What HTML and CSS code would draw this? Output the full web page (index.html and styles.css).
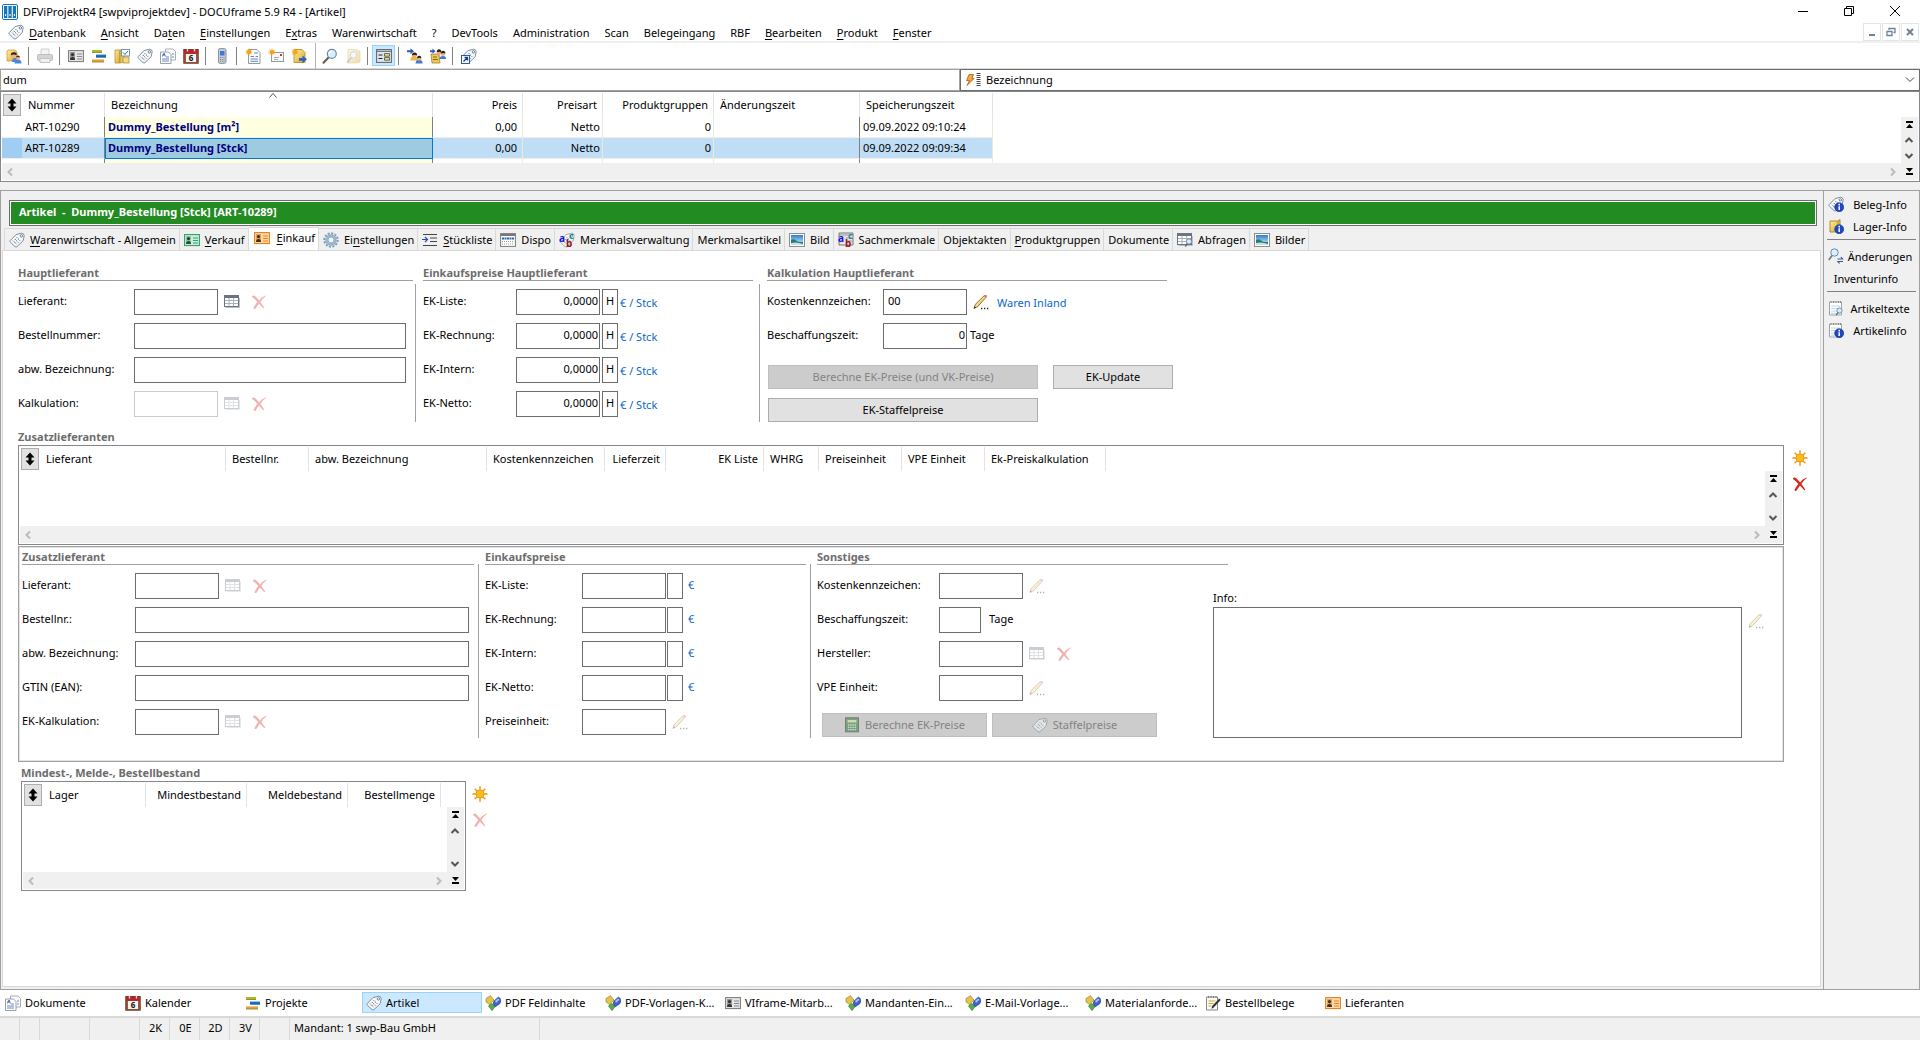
FILE: index.html
```html
<!DOCTYPE html>
<html lang="de">
<head>
    <meta charset="UTF-8">
    <meta name="viewport" content="width=device-width, initial-scale=1.0">
    <title>DFViProjektR4 [swpviprojektdev] - DOCUframe 5.9 R4 - [Artikel]</title>
    <link rel="stylesheet" href="styles.css">
</head>
<body>
    <!-- Farbverläufe -->
    <svg class="gradients" aria-hidden="true">
        <defs>
            <linearGradient id="gYellow" x1="0" y1="0" x2="1" y2="1"><stop offset="0" stop-color="#fff0a0"/><stop offset="1" stop-color="#d9a52c"/></linearGradient>
            <linearGradient id="gSky" x1="0" y1="0" x2="0" y2="1"><stop offset="0" stop-color="#2f7fd0"/><stop offset="1" stop-color="#d8f2fa"/></linearGradient>
        </defs>
    </svg>
    <!-- Icon-Vorlagen -->
    <svg class="sprite" aria-hidden="true">
        <symbol id="i-app" viewBox="0 0 16 16"><rect x=".5" y=".5" width="15" height="15" rx="1.5" fill="#fff" stroke="#1674b8"/><path d="M2 2h3.3v12H2zM6.4 2h3.3v12H6.4zM10.8 2H14v12h-3.2z" fill="#1674b8"/><path d="M3.6 10v2M8 10v2M12.4 10v2" stroke="#fff"/></symbol>
        <symbol id="i-tag" viewBox="0 0 16 16"><path d="M1.2 8.6 7 2.6l5.6-1.4q2.4.2 2.6 2.3l-1 5.2L8 14.6q-1 .8-2 0L1.2 10q-.6-.7 0-1.4z" fill="#f6f8fa" stroke="#7d8fa0"/><circle cx="12.4" cy="3.9" r="1.2" fill="#fff" stroke="#52677a" stroke-width=".8"/><path d="m4 8.6 3.6 3.6M5.8 7l3.6 3.6M7.6 5.2l3.6 3.6" stroke="#5b6d7e" stroke-dasharray="1.4 .6"/></symbol>
        <symbol id="i-login" viewBox="0 0 16 16"><path d="M2 2h7l2 2v9H1V3z" fill="url(#gYellow)" stroke="#c8a13c" stroke-width=".8"/><path d="M6 14q0-4 3-4t4 4z" fill="#4a86d8"/><circle cx="7.6" cy="7.4" r="2.6" fill="#e9b48a"/><path d="M4.8 7.2Q4.8 4 8 4.200t2.600 3Q8 5.800 4.800 7.200z" fill="#3a2416"/><path d="M8.500 15.500q0-4 3.500-4t3.500 4z" fill="#4a86d8"/><circle cx="12" cy="10" r="2" fill="#e9b48a"/><path d="M10 9.500q.4-2 2-2t2 2q-2-.8-4 0z" fill="#3a2416"/></symbol>
        <symbol id="i-printer" viewBox="0 0 16 16"><path d="M4 1h8v6H4z" fill="#f4f4f4" stroke="#cfcfcf"/><rect x=".5" y="6.500" width="15" height="6" rx="1" fill="#d4d4d4" stroke="#bdbdbd"/><path d="M3 10.500h10v4H3z" fill="#f0f0f0" stroke="#c4c4c4"/></symbol>
        <symbol id="i-card" viewBox="0 0 16 16"><rect x=".6" y="2.600" width="14.800" height="11" fill="#e6e6e6" stroke="#777"/><path d="M2 4h5v8H2z" fill="#999"/><circle cx="4.500" cy="6.600" r="1.600" fill="#333"/><path d="M2 12q0-3 2.500-3T7 12z" fill="#333"/><path d="M9 6h5M9 8.500h5M9 11h5" stroke="#888"/></symbol>
        <symbol id="i-card-green" viewBox="0 0 16 16"><rect x=".6" y="2.600" width="14.800" height="11" fill="#c9efdb" stroke="#27966a"/><path d="M2 4h5v8H2z" fill="#8cc7a8"/><circle cx="4.500" cy="6.600" r="1.600" fill="#333"/><path d="M2 12q0-3 2.500-3T7 12z" fill="#2c4a3a"/><path d="M9 6h5M9 8.500h5M9 11h5" stroke="#2fa274"/></symbol>
        <symbol id="i-card-orange" viewBox="0 0 16 16"><rect x=".6" y="2.600" width="14.800" height="11" fill="#ffd9a6" stroke="#dd7a16"/><path d="M2 4h5v8H2z" fill="#e2a25c"/><circle cx="4.500" cy="6.600" r="1.600" fill="#333"/><path d="M2 12q0-3 2.500-3T7 12z" fill="#4a2c12"/><path d="M9 6h5M9 8.500h5M9 11h5" stroke="#e8821a"/></symbol>
        <symbol id="i-gantt" viewBox="0 0 16 16"><path d="M1 2h10v2.800H1z" fill="#a4bf1c"/><path d="M5 6.600h10v2.800H5z" fill="#1773c4"/><path d="M1 11.400h12v2.800H1z" fill="#e6a23a"/><path d="M1 4.500h10M1 14h12" stroke="#7c7014" stroke-width=".6"/><path d="M5 9.200h10" stroke="#0b3f75" stroke-width=".6"/></symbol>
        <symbol id="i-plan" viewBox="0 0 16 16"><path d="M1 2h5v13H1z" fill="url(#gYellow)" stroke="#b98f2c" stroke-width=".8"/><path d="M6 2h4v12l-4 1z" fill="#e8c35a" stroke="#b98f2c" stroke-width=".8"/><rect x="7.500" y="1.500" width="8" height="6.500" fill="#fff" stroke="#6f97c4"/><path d="m9 4.500 2 2 3-3.500" fill="none" stroke="#2c64b0"/><path d="M9 9h6v6H9z" fill="#f1d98c" stroke="#b98f2c" stroke-width=".8"/></symbol>
        <symbol id="i-docs" viewBox="0 0 16 16"><path d="M5.500 1h7.500l2.500 2.500V12h-10z" fill="#fdfdfd" stroke="#9aa5b0" stroke-width=".9"/><path d="M.5 4h8L11 6.500v9H.5z" fill="#fff" stroke="#8a96a3" stroke-width=".9"/><path d="M2 7h3M6 9h3M2 11h7M2 13h7M12 6h2M12 9h2" stroke="#6b87b8"/><path d="M2.500 8.500 4 5l1.500 3.500" fill="none" stroke="#2c4fc0" stroke-width=".8"/></symbol>
        <symbol id="i-cal" viewBox="0 0 16 16"><rect x=".8" y="1.500" width="14.400" height="13.700" fill="#9a5a40" stroke="#6e3626"/><path d="M1 1.800h14v4H1z" fill="#b8242a"/><path d="M3 6h10v8H3z" fill="#f7f3ee"/><path d="M4.500.5v3M11.500.5v3" stroke="#ddd" stroke-width="1.400"/><text x="8" y="13" font-size="8" font-weight="bold" text-anchor="middle" fill="#111">6</text></symbol>
        <symbol id="i-phone" viewBox="0 0 16 16"><rect x="4.500" y=".6" width="7.500" height="14.800" rx="1.600" fill="#c9ced4" stroke="#8b939c"/><path d="M6 3h4.500v4.500H6z" fill="#2f7be0"/><path d="M6 9.500h4.500M6 11.500h4.500M6 13.300h4.500" stroke="#78828c" stroke-dasharray="1 .75"/></symbol>
        <symbol id="i-star" viewBox="0 0 16 16"><path d="m4 0 .8 2.500L7 1.200 5.900 3.300 8 4 5.900 4.700 7 6.800 4.800 5.600 4 8l-.8-2.400L1 6.800l1.100-2.100L0 4l2.100-.7L1 1.200l2.200 1.300z" fill="#f5a312"/></symbol>
        <symbol id="i-doc-new" viewBox="0 0 16 16"><path d="M3.500 1.500H12l3 3v11H3.500z" fill="#fbfbfc" stroke="#8f9ba8"/><path d="M9 5h4M5.500 8.500H9M5.500 11H13M5.500 13.300H13M10.500 8.500H13" stroke="#6b87b8"/><use href="#i-star" width="16" height="16"/></symbol>
        <symbol id="i-mail-new" viewBox="0 0 16 16"><rect x="3.500" y="4.500" width="12" height="9" fill="#fafafa" stroke="#999"/><path d="M12 6h2v2h-2z" fill="#c43a2a"/><path d="M6 9.500h5M6 11.500h4" stroke="#aaa"/><use href="#i-star" width="16" height="16"/></symbol>
        <symbol id="i-note-go" viewBox="0 0 16 16"><path d="M3 1.500h8l3 3v10H3z" fill="url(#gYellow)" stroke="#c39a30"/><path d="M8 10h3.500V7.500L16 11.300l-4.500 3.900v-2.400H8z" fill="#2e62c4"/><use href="#i-star" width="16" height="16"/></symbol>
        <symbol id="i-mag" viewBox="0 0 16 16"><path d="m6.500 9.500-5 5.200" stroke="#6a5a4a" stroke-width="2" stroke-linecap="round"/><circle cx="9.800" cy="5.800" r="4.500" fill="#d8efff" stroke="#6f8aa5" stroke-width="1.200"/><path d="M7 5.500q.8-2.300 3-2.500" fill="none" stroke="#fff" stroke-width="1.400"/></symbol>
        <symbol id="i-folder-mag" viewBox="0 0 16 16"><path d="M3 1.500h8l2 1.500h2v11l-5 1H3z" fill="url(#gYellow)" stroke="#c8a13c" stroke-width=".8"/><path d="M6.500 9.500 2 14.500" stroke="#777" stroke-width="1.600"/><circle cx="8.500" cy="7" r="3.200" fill="#e6f3fb" stroke="#8a9cae"/></symbol>
        <symbol id="i-form" viewBox="0 0 16 16"><rect x=".6" y="1.600" width="14.800" height="12.800" fill="#dfe6ec" stroke="#5a6068"/><path d="M1 3.300h14" stroke="#5a6068"/><path d="M2.500 7h4M2.500 10.500h4" stroke="#222"/><path d="M8.500 5.600h5v2.600h-5zM8.500 9.600h5v2.600h-5z" fill="#e9e28a" stroke="#444" stroke-width=".8"/></symbol>
        <symbol id="i-people" viewBox="0 0 16 16"><path d="M3.500 12.500q0-4.500 3.500-4.500t3.500 4.500z" fill="#e8b83c"/><circle cx="7.500" cy="7.500" r="2.300" fill="#e6ab7e"/><path d="M5 7.400Q5 4.600 7.600 4.600T10 7.400Q7.500 6 5 7.400z" fill="#2c1a10"/><path d="M8.500 15.600q0-3.800 3.500-3.800t3.700 3.800z" fill="#3f7bd2"/><circle cx="12.200" cy="10.600" r="2.200" fill="#e6ab7e"/><path d="M10 10.200q.2-2.400 2.200-2.400t2.200 2.400q-2.200-1-4.400 0z" fill="#2c1a10"/><path d="M0 2.200h3.500V.2L7 3.200 3.500 6.200V4.200H0z" fill="#2e5cb8"/></symbol>
        <symbol id="i-people-note" viewBox="0 0 16 16"><path d="M1 6h8l1 9H2z" fill="#e9c75a" stroke="#a98428" stroke-width=".8"/><path d="M3 9h4M3 11.500h5" stroke="#8a6a1c"/><circle cx="9" cy="4.500" r="2.200" fill="#e6ab7e"/><path d="M6.700 4.300q.2-3 2.400-3t2.300 3q-2.300-1.300-4.700 0z" fill="#2c1a10"/><circle cx="13" cy="5.800" r="2.200" fill="#e6ab7e"/><path d="M10.800 5.500q.2-2.800 2.300-2.800t2.300 2.800q-2.300-1.200-4.600 0z" fill="#2c1a10"/><path d="M9.500 11q0-3 3.500-3t3 3z" fill="#3f7bd2"/><path d="M0 2.200h2.500V.6L5.500 3.200 2.500 5.800V4.200H0z" fill="#2e5cb8"/></symbol>
        <symbol id="i-tag-link" viewBox="0 0 16 16"><use href="#i-tag" width="16" height="16"/><rect x=".5" y="7.500" width="8" height="8" fill="#fff" stroke="#2a5aa8"/><path d="M2.500 13.500 6 10M3.500 9.500h3v3" fill="none" stroke="#123f8c" stroke-width="1.300"/></symbol>
        <symbol id="i-bolt" viewBox="0 0 16 16"><path d="M4 2.500h4.500L7 6.500h2L2 13.500l2.500-5H1.500z" fill="#f6a93b" stroke="#9a4c14" stroke-width=".7"/><path d="M13.500 1v14" stroke="#444" stroke-width="4" stroke-dasharray="1 1"/></symbol>
        <symbol id="i-gear" viewBox="0 0 16 16"><circle cx="8" cy="8" r="6.700" fill="none" stroke="#7f9dbb" stroke-width="2" stroke-dasharray="2.100 1.400"/><circle cx="8" cy="8" r="4.600" fill="#eef3f8" stroke="#9ab4cf" stroke-width="2.600"/><circle cx="8" cy="8" r="3" fill="#f3f4f6" stroke="#6d89a6" stroke-width=".7"/></symbol>
        <symbol id="i-indent" viewBox="0 0 16 16"><path d="M1 2.500h14M8 6h7M8 9.500h7M1 13.500h14" stroke="#444"/><path d="M0 7.500h4.500M3 5 5.500 7.500 3 10" fill="none" stroke="#1d4fb8" stroke-width="1.200"/></symbol>
        <symbol id="i-dispo" viewBox="0 0 16 16"><rect x=".6" y="1.600" width="14.800" height="12.800" fill="#fff" stroke="#777"/><path d="M1 3h14" stroke="#777" stroke-width="2"/><path d="M2 6.500h12" stroke="#2b62b0" stroke-width="2" stroke-dasharray="2 .5"/><path d="M2 9.500h12M2 12h12" stroke="#999" stroke-dasharray="1 1"/></symbol>
        <symbol id="i-abc-tag" viewBox="0 0 16 16"><use href="#i-tag" width="16" height="16" opacity=".7"/><text x="0" y="10" font-size="10" font-weight="bold" fill="#1616e0">a</text><text x="10" y="7" font-size="9" font-weight="bold" fill="#1c8a8a">c</text><text x="7" y="15" font-size="10" font-weight="bold" fill="#9c1420">b</text></symbol>
        <symbol id="i-abc" viewBox="0 0 16 16"><path d="M1 1h14v12H1z" fill="#e3e3e6" stroke="#777"/><path d="M1 3h14M8 6h6M8 9h6" stroke="#999"/><text x="0" y="10" font-size="10" font-weight="bold" fill="#1616e0">a</text><text x="10" y="7" font-size="9" font-weight="bold" fill="#1c8a8a">c</text><text x="7" y="15" font-size="10" font-weight="bold" fill="#9c1420">b</text></symbol>
        <symbol id="i-pic" viewBox="0 0 16 16"><rect x=".5" y="1.500" width="15" height="13" fill="#fff" stroke="#8f8f8f"/><path d="M2 3h12v10H2z" fill="url(#gSky)"/><path d="M2 8q3-1.500 5 .5t7 1.500v3H2z" fill="#2a7a68"/><path d="M2 11q6-1.500 12 1v1H2z" fill="#bfe3ea"/></symbol>
        <symbol id="i-grid" viewBox="0 0 16 16"><path d="M1.500 13.500h14V4" fill="none" stroke="#b9c0c8"/><rect x=".5" y="1.500" width="14" height="11" fill="#fff" stroke="#6b7480"/><path d="M1 3h13" stroke="#6b7480" stroke-width="2"/><path d="M1 6.500h13M1 9.500h13M5 4v8M9.500 4v8" stroke="#a9b1ba"/></symbol>
        <symbol id="i-grid-mag" viewBox="0 0 16 16"><use href="#i-grid" width="16" height="16"/><circle cx="12" cy="9.500" r="2.600" fill="#d5ecfb" stroke="#7591ad"/><path d="m10.300 11.600-2 3" stroke="#666" stroke-width="1.300"/></symbol>
        <symbol id="i-del" viewBox="0 0 16 16"><path d="M1 2.200Q3 .8 4.500 2.500q2 2 3.700 4Q10.500 3 14.500 1.500q.8 0 .3.600Q11.500 4.500 9.400 8q2 2.600 3.800 5.600-.6 1-1.400.2Q10 11.500 8 9.700q-2.400 2.600-3.500 5-1.600 1-2-.7Q4 10.500 6.300 7.900 4 5 1 3z" fill="#d9281e"/></symbol>
        <symbol id="i-pencil" viewBox="0 0 16 16"><path d="m1 14.500 1.200-4L11 1.800q1.500-1 2.600.8L4.800 12.500z" fill="#f6d97e" stroke="#7f6230" stroke-width=".9"/><path d="m10.600 2.200 1-1q1.500-.8 2.600.7l-1 1.600z" fill="#d9747c"/><path d="m1 14.500.6-2 1.500 1z" fill="#222"/><path d="M8 14.500h1.300M11 14.500h1.300M14 14.500h1.300" stroke="#222" stroke-width="1.400"/></symbol>
        <symbol id="i-sun" viewBox="0 0 16 16"><path d="M8 .3v15.400M.3 8h15.400M2.700 2.700l10.600 10.600M13.300 2.700 2.700 13.300" stroke="#ee9a14" stroke-width="1.500"/><circle cx="8" cy="8" r="4" fill="#fdbc1e" stroke="#ee9a14"/></symbol>
        <symbol id="i-calc" viewBox="0 0 16 16"><rect x="1.500" y=".8" width="13" height="14" fill="#3c8a4a" stroke="#444"/><path d="M3.500 3h9v2.500h-9z" fill="#d3e0a4"/><path d="M4 8h8M4 10.300h8M4 12.600h8" stroke="#cfe6cf" stroke-width="1.300" stroke-dasharray="1.400 .8"/></symbol>
        <symbol id="i-diamonds" viewBox="0 0 16 16"><path d="M1 3.500 5.500.6 9 5 4.500 9.500 1 7z" fill="#e3c44a" stroke="#a8882a" stroke-width=".7"/><path d="m9 6 4.500-4L16 4.500l-1 4-5 3.500L8 9z" fill="#3d63cf" stroke="#24418f" stroke-width=".7"/><path d="m3.500 11 3.300-2.400 3.200 3L7 15.600z" fill="#5cab52" stroke="#2f7a2c" stroke-width=".7"/><path d="m10 6 3-2.600 1.500 1.400-3.300 3z" fill="#a9c4f5"/></symbol>
        <symbol id="i-note-pen" viewBox="0 0 16 16"><path d="M1.500 2h11v13h-11z" fill="#fbfbf2" stroke="#888"/><path d="M3.500 1v2M6 1v2M8.500 1v2M11 1v2" stroke="#777"/><path d="M3.500 6h7M3.500 8.500h5M3.500 11h3" stroke="#c7a742"/><path d="m6.500 14 .7-3 7-7.500 1.500 1.500-7 7.500z" fill="#333"/></symbol>
        <symbol id="i-info" viewBox="0 0 16 16"><circle cx="11.200" cy="11.200" r="4.500" fill="#1f49c4" stroke="#12308c" stroke-width=".6"/><path d="M11.200 7.800v1.600M11.200 10.300v3.800" stroke="#fff" stroke-width="1.500"/></symbol>
        <symbol id="i-tag-info" viewBox="0 0 16 16"><use href="#i-tag" width="16" height="16"/><use href="#i-info" width="16" height="16"/></symbol>
        <symbol id="i-box-info" viewBox="0 0 16 16"><path d="M2 3h8l2-1.500v11L10 14H2z" fill="url(#gYellow)" stroke="#a98428" stroke-width=".9"/><path d="M10 3v11" stroke="#a98428" stroke-width=".8"/><use href="#i-info" width="16" height="16"/></symbol>
        <symbol id="i-mag-sync" viewBox="0 0 16 16"><path d="M4 7.500.8 12" stroke="#777" stroke-width="1.600"/><circle cx="6.500" cy="4.500" r="3.700" fill="#d8efff" stroke="#6f8aa5"/><path d="M9.500 11h5l-1.500-2M15 13.500h-5l1.500 2" fill="none" stroke="#3a5a86" stroke-width="1.200"/></symbol>
        <symbol id="i-pad" viewBox="0 0 16 16"><path d="M1.500 2h12v13h-12z" fill="#fff" stroke="#9aa3ab"/><path d="M3 1v2M5.500 1v2M8 1v2M10.500 1v2M12.500 1v2" stroke="#888"/><path d="M3 6h9M3 8.500h9M3 11h9M3 13.300h9" stroke="#c3d6e6"/></symbol>
        <symbol id="i-pad-mag" viewBox="0 0 16 16"><use href="#i-pad" width="16" height="16"/><circle cx="11.500" cy="10.500" r="2.600" fill="#d5ecfb" stroke="#7591ad"/><path d="m10 12.500-1.800 2.600" stroke="#666" stroke-width="1.300"/></symbol>
        <symbol id="i-pad-info" viewBox="0 0 16 16"><use href="#i-pad" width="16" height="16"/><use href="#i-info" width="16" height="16"/></symbol>
        <symbol id="i-sort" viewBox="0 0 16 16"><path d="M8 1.500 12.500 6.500h-3v3h3L8 14.500 3.500 9.500h3v-3h-3z" fill="#000"/></symbol>
        <symbol id="i-up" viewBox="0 0 16 16"><path d="m4.500 10 3.500-3.500L11.500 10" fill="none" stroke="#555" stroke-width="2"/></symbol>
        <symbol id="i-down" viewBox="0 0 16 16"><path d="m4.500 6 3.500 3.500L11.500 6" fill="none" stroke="#555" stroke-width="2"/></symbol>
        <symbol id="i-left" viewBox="0 0 16 16"><path d="M10 4.500 6.500 8l3.500 3.500" fill="none" stroke="#bbb" stroke-width="2"/></symbol>
        <symbol id="i-right" viewBox="0 0 16 16"><path d="M6 4.500 9.500 8 6 11.500" fill="none" stroke="#bbb" stroke-width="2"/></symbol>
        <symbol id="i-first" viewBox="0 0 16 16"><path d="M5 4h7v2H5zM8.500 7l3.500 4H5z" fill="#000"/></symbol>
        <symbol id="i-last" viewBox="0 0 16 16"><path d="M5 10h7v2H5zM8.500 9 12 5H5z" fill="#000"/></symbol>
    </svg>

    <header class="titlebar">
        <svg class="icon"><use href="#i-app"/></svg>
        <span class="title">DFViProjektR4 [swpviprojektdev] - DOCUframe 5.9 R4 - [Artikel]</span>
        <div class="window-buttons">
            <button aria-label="Minimieren"><svg viewBox="0 0 10 10"><path d="M0 5.500h10"/></svg></button>
            <button aria-label="Verkleinern"><svg viewBox="0 0 10 10"><path d="M.5 2.500h7v7h-7zM2.500 2.500v-2h7v7h-2"/></svg></button>
            <button aria-label="Schließen"><svg viewBox="0 0 10 10"><path d="m0 0 10 10M10 0 0 10"/></svg></button>
        </div>
    </header>

    <nav class="menubar">
        <svg class="icon"><use href="#i-tag"/></svg>
        <button><u>D</u>atenbank</button>
        <button><u>A</u>nsicht</button>
        <button>Da<u>t</u>en</button>
        <button><u>E</u>instellungen</button>
        <button>E<u>x</u>tras</button>
        <button>Warenwirtschaft</button>
        <button>?</button>
        <button>DevTools</button>
        <button>Administration</button>
        <button>Scan</button>
        <button>Belegeingang</button>
        <button>RBF</button>
        <button><u>B</u>earbeiten</button>
        <button><u>P</u>rodukt</button>
        <button><u>F</u>enster</button>
        <div class="mdi-buttons">
            <button aria-label="Fenster minimieren"><svg viewBox="0 0 10 10"><path d="M2 8h6" stroke-width="2"/></svg></button>
            <button aria-label="Fenster verkleinern"><svg viewBox="0 0 10 10"><path d="M1 4.500h5v4H1zM3 3V1.500h6v4H7.500" stroke-width="1.300"/></svg></button>
            <button aria-label="Fenster schließen"><svg viewBox="0 0 10 10"><path d="m2 2 6 6M8 2 2 8" stroke-width="2"/></svg></button>
        </div>
    </nav>

    <div class="toolbar">
        <button aria-label="Anmelden"><svg class="icon"><use href="#i-login"/></svg></button>
        <span class="sep"></span>
        <button aria-label="Drucken" disabled><svg class="icon"><use href="#i-printer"/></svg></button>
        <span class="sep"></span>
        <button aria-label="Adressen"><svg class="icon"><use href="#i-card"/></svg></button>
        <button aria-label="Projekte"><svg class="icon"><use href="#i-gantt"/></svg></button>
        <button aria-label="Aufgaben"><svg class="icon"><use href="#i-plan"/></svg></button>
        <button aria-label="Artikel"><svg class="icon"><use href="#i-tag"/></svg></button>
        <button aria-label="Dokumente"><svg class="icon"><use href="#i-docs"/></svg></button>
        <button aria-label="Kalender"><svg class="icon"><use href="#i-cal"/></svg></button>
        <span class="sep"></span>
        <button aria-label="Telefon"><svg class="icon"><use href="#i-phone"/></svg></button>
        <span class="sep"></span>
        <button aria-label="Neues Dokument"><svg class="icon"><use href="#i-doc-new"/></svg></button>
        <button aria-label="Neue E-Mail"><svg class="icon"><use href="#i-mail-new"/></svg></button>
        <button aria-label="Neue Notiz"><svg class="icon"><use href="#i-note-go"/></svg></button>
        <span class="sep band"></span>
        <button aria-label="Suchen"><svg class="icon"><use href="#i-mag"/></svg></button>
        <button aria-label="Ordner durchsuchen" disabled><svg class="icon faded"><use href="#i-folder-mag"/></svg></button>
        <span class="sep"></span>
        <button class="pressed" aria-label="Formular"><svg class="icon"><use href="#i-form"/></svg></button>
        <span class="sep"></span>
        <button aria-label="Weiterleiten"><svg class="icon"><use href="#i-people"/></svg></button>
        <button aria-label="Notiz weiterleiten"><svg class="icon"><use href="#i-people-note"/></svg></button>
        <span class="sep"></span>
        <button aria-label="Verknüpfung"><svg class="icon"><use href="#i-tag-link"/></svg></button>
    </div>

    <div class="searchbar">
        <input type="text" class="search" value="dum" aria-label="Suchbegriff">
        <div class="search-field">
            <svg class="icon"><use href="#i-bolt"/></svg>
            <select aria-label="Suchfeld">
                <option>Bezeichnung</option>
            </select>
            <svg class="chevron" viewBox="0 0 10 6"><path d="m1 .5 4 4 4-4"/></svg>
        </div>
    </div>

    <section class="list articles">
        <div class="list-body">
            <table>
                <colgroup>
                    <col class="w20"><col class="w83"><col class="w328"><col class="w90"><col class="w80"><col class="w111"><col class="w146"><col class="w133">
                </colgroup>
                <thead>
                    <tr>
                        <th class="no-line"><button class="sort" aria-label="Sortieren"><svg class="icon"><use href="#i-sort"/></svg></button></th>
                        <th>Nummer</th>
                        <th class="sorted">Bezeichnung<svg class="caret" viewBox="0 0 8 5"><path d="m.5 4.500 3.500-4 3.500 4"/></svg></th>
                        <th class="num">Preis</th>
                        <th class="num">Preisart</th>
                        <th class="num">Produktgruppen</th>
                        <th>Änderungszeit</th>
                        <th>Speicherungszeit</th>
                    </tr>
                </thead>
                <tbody>
                    <tr>
                        <td class="no-line"></td>
                        <td class="dark-line">ART-10290</td>
                        <td class="name dark-line">Dummy_Bestellung [m²]</td>
                        <td class="num price">0,00</td>
                        <td class="num">Netto</td>
                        <td class="num">0</td>
                        <td class="dark-line"></td>
                        <td>09.09.2022 09:10:24</td>
                    </tr>
                    <tr class="selected">
                        <td class="marker no-line"></td>
                        <td class="dark-line">ART-10289</td>
                        <td class="name current">Dummy_Bestellung [Stck]</td>
                        <td class="num price">0,00</td>
                        <td class="num">Netto</td>
                        <td class="num">0</td>
                        <td class="dark-line"></td>
                        <td>09.09.2022 09:09:34</td>
                    </tr>
                    <tr class="rest">
                        <td class="no-line"></td>
                        <td class="dark-line"></td>
                        <td class="name dark-line"></td>
                        <td></td>
                        <td></td>
                        <td></td>
                        <td class="dark-line"></td>
                        <td></td>
                    </tr>
                </tbody>
            </table>
        </div>
        <div class="vscroll">
            <button aria-label="Zum Anfang"><svg class="icon"><use href="#i-first"/></svg></button>
            <button aria-label="Nach oben"><svg class="icon"><use href="#i-up"/></svg></button>
            <button class="end" aria-label="Nach unten"><svg class="icon"><use href="#i-down"/></svg></button>
        </div>
        <div class="hscroll">
            <button aria-label="Nach links"><svg class="icon"><use href="#i-left"/></svg></button>
            <button aria-label="Nach rechts"><svg class="icon"><use href="#i-right"/></svg></button>
        </div>
        <div class="corner">
            <button aria-label="Zum Ende"><svg class="icon"><use href="#i-last"/></svg></button>
        </div>
    </section>

    <div class="workspace">
        <main class="form-area">
            <h1 class="record-title"><span>Artikel&nbsp; -&nbsp; Dummy_Bestellung [Stck] [ART-10289]</span></h1>

            <div class="tabs" role="tablist">
                <button role="tab"><svg class="icon"><use href="#i-tag"/></svg><span><u>W</u>arenwirtschaft - Allgemein</span></button>
                <button role="tab"><svg class="icon"><use href="#i-card-green"/></svg><span><u>V</u>erkauf</span></button>
                <button role="tab" class="active" aria-selected="true"><svg class="icon"><use href="#i-card-orange"/></svg><span><u>E</u>inkauf</span></button>
                <button role="tab"><svg class="icon"><use href="#i-gear"/></svg><span>Ei<u>n</u>stellungen</span></button>
                <button role="tab"><svg class="icon"><use href="#i-indent"/></svg><span><u>S</u>tückliste</span></button>
                <button role="tab"><svg class="icon"><use href="#i-dispo"/></svg><span>Dispo</span></button>
                <button role="tab"><svg class="icon"><use href="#i-abc-tag"/></svg><span>Merkmalsverwaltung</span></button>
                <button role="tab"><span>Merkmalsartikel</span></button>
                <button role="tab"><svg class="icon"><use href="#i-pic"/></svg><span>Bild</span></button>
                <button role="tab"><svg class="icon"><use href="#i-abc"/></svg><span>Sachmerkmale</span></button>
                <button role="tab"><span>Objektakten</span></button>
                <button role="tab"><span><u>P</u>roduktgruppen</span></button>
                <button role="tab"><span>Dokumente</span></button>
                <button role="tab"><svg class="icon"><use href="#i-grid-mag"/></svg><span>Abfragen</span></button>
                <button role="tab"><svg class="icon"><use href="#i-pic"/></svg><span>Bilder</span></button>
            </div>

            <div class="page">
                <div class="groups">
                    <section class="group g-main">
                        <h2>Hauptlieferant</h2>
                        <div class="row">
                            <label for="lieferant">Lieferant:</label>
                            <input type="text" id="lieferant" class="short">
                            <button class="tool" aria-label="Lieferant auswählen"><svg class="icon"><use href="#i-grid"/></svg></button>
                            <button class="tool" aria-label="Lieferant entfernen" disabled><svg class="icon"><use href="#i-del"/></svg></button>
                        </div>
                        <div class="row">
                            <label for="bestellnummer">Bestellnummer:</label>
                            <input type="text" id="bestellnummer" class="long">
                        </div>
                        <div class="row">
                            <label for="bezeichnung">abw. Bezeichnung:</label>
                            <input type="text" id="bezeichnung" class="long">
                        </div>
                        <div class="row">
                            <label for="kalkulation">Kalkulation:</label>
                            <input type="text" id="kalkulation" class="short" disabled>
                            <button class="tool" aria-label="Kalkulation auswählen" disabled><svg class="icon"><use href="#i-grid"/></svg></button>
                            <button class="tool" aria-label="Kalkulation entfernen" disabled><svg class="icon"><use href="#i-del"/></svg></button>
                        </div>
                    </section>
                    <div class="divider"></div>
                    <section class="group g-prices">
                        <h2>Einkaufspreise Hauptlieferant</h2>
                        <div class="row">
                            <label for="ekListe">EK-Liste:</label>
                            <input type="text" id="ekListe" class="short num" value="0,0000">
                            <input type="text" class="flag" value="H" aria-label="Herkunft EK-Liste">
                            <a href="#">€ / Stck</a>
                        </div>
                        <div class="row">
                            <label for="ekRechnung">EK-Rechnung:</label>
                            <input type="text" id="ekRechnung" class="short num" value="0,0000">
                            <input type="text" class="flag" value="H" aria-label="Herkunft EK-Rechnung">
                            <a href="#">€ / Stck</a>
                        </div>
                        <div class="row">
                            <label for="ekIntern">EK-Intern:</label>
                            <input type="text" id="ekIntern" class="short num" value="0,0000">
                            <input type="text" class="flag" value="H" aria-label="Herkunft EK-Intern">
                            <a href="#">€ / Stck</a>
                        </div>
                        <div class="row">
                            <label for="ekNetto">EK-Netto:</label>
                            <input type="text" id="ekNetto" class="short num" value="0,0000">
                            <input type="text" class="flag" value="H" aria-label="Herkunft EK-Netto">
                            <a href="#">€ / Stck</a>
                        </div>
                    </section>
                    <div class="divider"></div>
                    <section class="group g-calc">
                        <h2>Kalkulation Hauptlieferant</h2>
                        <div class="row">
                            <label for="kostenkz">Kostenkennzeichen:</label>
                            <input type="text" id="kostenkz" class="short" value="00">
                            <button class="tool" aria-label="Kostenkennzeichen bearbeiten"><svg class="icon"><use href="#i-pencil"/></svg></button>
                            <a href="#" class="spaced">Waren Inland</a>
                        </div>
                        <div class="row">
                            <label for="beschaffung">Beschaffungszeit:</label>
                            <input type="text" id="beschaffung" class="short num" value="0">
                            <span class="unit">Tage</span>
                        </div>
                        <div class="buttons">
                            <button class="btn" disabled>Berechne EK-Preise (und VK-Preise)</button>
                            <button class="btn">EK-Update</button>
                            <button class="btn">EK-Staffelpreise</button>
                        </div>
                    </section>
                </div>

                <h2 class="list-title">Zusatzlieferanten</h2>
                <div class="list-row">
                    <section class="list suppliers">
                        <div class="list-body">
                            <table>
                                <colgroup>
                                    <col class="w20"><col class="w186"><col class="w83"><col class="w178"><col class="w118"><col class="w61"><col class="w98"><col class="w55"><col class="w83"><col class="w83"><col class="w121">
                                </colgroup>
                                <thead>
                                    <tr>
                                        <th class="no-line"><button class="sort" aria-label="Sortieren"><svg class="icon"><use href="#i-sort"/></svg></button></th>
                                        <th>Lieferant</th>
                                        <th>Bestellnr.</th>
                                        <th>abw. Bezeichnung</th>
                                        <th>Kostenkennzeichen</th>
                                        <th class="num">Lieferzeit</th>
                                        <th class="num">EK Liste</th>
                                        <th>WHRG</th>
                                        <th>Preiseinheit</th>
                                        <th>VPE Einheit</th>
                                        <th>Ek-Preiskalkulation</th>
                                    </tr>
                                </thead>
                            </table>
                        </div>
                        <div class="vscroll">
                            <button aria-label="Zum Anfang"><svg class="icon"><use href="#i-first"/></svg></button>
                            <button aria-label="Nach oben"><svg class="icon"><use href="#i-up"/></svg></button>
                            <button class="end" aria-label="Nach unten"><svg class="icon"><use href="#i-down"/></svg></button>
                        </div>
                        <div class="hscroll">
                            <button aria-label="Nach links"><svg class="icon"><use href="#i-left"/></svg></button>
                            <button aria-label="Nach rechts"><svg class="icon"><use href="#i-right"/></svg></button>
                        </div>
                        <div class="corner">
                            <button aria-label="Zum Ende"><svg class="icon"><use href="#i-last"/></svg></button>
                        </div>
                    </section>
                    <div class="list-tools">
                        <button aria-label="Lieferant hinzufügen"><svg class="icon"><use href="#i-sun"/></svg></button>
                        <button aria-label="Lieferant löschen"><svg class="icon"><use href="#i-del"/></svg></button>
                    </div>
                </div>

                <div class="detail">
                    <section class="group g-supplier">
                        <h2>Zusatzlieferant</h2>
                        <div class="row">
                            <label for="zLieferant">Lieferant:</label>
                            <input type="text" id="zLieferant" class="short">
                            <button class="tool" aria-label="Lieferant auswählen" disabled><svg class="icon"><use href="#i-grid"/></svg></button>
                            <button class="tool" aria-label="Lieferant entfernen" disabled><svg class="icon"><use href="#i-del"/></svg></button>
                        </div>
                        <div class="row">
                            <label for="zBestellnr">Bestellnr.:</label>
                            <input type="text" id="zBestellnr" class="long">
                        </div>
                        <div class="row">
                            <label for="zBezeichnung">abw. Bezeichnung:</label>
                            <input type="text" id="zBezeichnung" class="long">
                        </div>
                        <div class="row">
                            <label for="gtin">GTIN (EAN):</label>
                            <input type="text" id="gtin" class="long">
                        </div>
                        <div class="row">
                            <label for="zKalkulation">EK-Kalkulation:</label>
                            <input type="text" id="zKalkulation" class="short">
                            <button class="tool" aria-label="Kalkulation auswählen" disabled><svg class="icon"><use href="#i-grid"/></svg></button>
                            <button class="tool" aria-label="Kalkulation entfernen" disabled><svg class="icon"><use href="#i-del"/></svg></button>
                        </div>
                    </section>
                    <div class="divider"></div>
                    <section class="group g-supplier-prices">
                        <h2>Einkaufspreise</h2>
                        <div class="row">
                            <label for="zListe">EK-Liste:</label>
                            <input type="text" id="zListe" class="short">
                            <input type="text" class="flag" aria-label="Herkunft EK-Liste">
                            <a href="#">€</a>
                        </div>
                        <div class="row">
                            <label for="zRechnung">EK-Rechnung:</label>
                            <input type="text" id="zRechnung" class="short">
                            <input type="text" class="flag" aria-label="Herkunft EK-Rechnung">
                            <a href="#">€</a>
                        </div>
                        <div class="row">
                            <label for="zIntern">EK-Intern:</label>
                            <input type="text" id="zIntern" class="short">
                            <input type="text" class="flag" aria-label="Herkunft EK-Intern">
                            <a href="#">€</a>
                        </div>
                        <div class="row">
                            <label for="zNetto">EK-Netto:</label>
                            <input type="text" id="zNetto" class="short">
                            <input type="text" class="flag" aria-label="Herkunft EK-Netto">
                            <a href="#">€</a>
                        </div>
                        <div class="row">
                            <label for="preiseinheit">Preiseinheit:</label>
                            <input type="text" id="preiseinheit" class="short">
                            <button class="tool" aria-label="Preiseinheit bearbeiten" disabled><svg class="icon"><use href="#i-pencil"/></svg></button>
                        </div>
                    </section>
                    <div class="divider"></div>
                    <section class="group g-misc">
                        <h2>Sonstiges</h2>
                        <div class="row">
                            <label for="zKostenkz">Kostenkennzeichen:</label>
                            <input type="text" id="zKostenkz" class="short">
                            <button class="tool" aria-label="Kostenkennzeichen bearbeiten" disabled><svg class="icon"><use href="#i-pencil"/></svg></button>
                        </div>
                        <div class="row">
                            <label for="zBeschaffung">Beschaffungszeit:</label>
                            <input type="text" id="zBeschaffung" class="tiny">
                            <span class="unit">Tage</span>
                        </div>
                        <div class="row">
                            <label for="hersteller">Hersteller:</label>
                            <input type="text" id="hersteller" class="short">
                            <button class="tool" aria-label="Hersteller auswählen" disabled><svg class="icon"><use href="#i-grid"/></svg></button>
                            <button class="tool" aria-label="Hersteller entfernen" disabled><svg class="icon"><use href="#i-del"/></svg></button>
                        </div>
                        <div class="row">
                            <label for="vpe">VPE Einheit:</label>
                            <input type="text" id="vpe" class="short">
                            <button class="tool" aria-label="VPE Einheit bearbeiten" disabled><svg class="icon"><use href="#i-pencil"/></svg></button>
                        </div>
                        <div class="buttons">
                            <button class="btn" disabled><svg class="icon"><use href="#i-calc"/></svg>Berechne EK-Preise</button>
                            <button class="btn" disabled><svg class="icon"><use href="#i-tag"/></svg>Staffelpreise</button>
                        </div>
                    </section>
                    <div class="info">
                        <label for="info">Info:</label>
                        <textarea id="info"></textarea>
                        <button class="tool" aria-label="Info bearbeiten" disabled><svg class="icon"><use href="#i-pencil"/></svg></button>
                    </div>
                </div>

                <div class="stock">
                    <h2>Mindest-, Melde-, Bestellbestand</h2>
                    <div class="list-row">
                        <section class="list stock-list">
                            <div class="list-body">
                                <table>
                                    <colgroup>
                                        <col class="w20"><col class="w103"><col class="w101"><col class="w101"><col class="w93">
                                    </colgroup>
                                    <thead>
                                        <tr>
                                            <th class="no-line"><button class="sort" aria-label="Sortieren"><svg class="icon"><use href="#i-sort"/></svg></button></th>
                                            <th>Lager</th>
                                            <th class="num">Mindestbestand</th>
                                            <th class="num">Meldebestand</th>
                                            <th class="num">Bestellmenge</th>
                                        </tr>
                                    </thead>
                                </table>
                            </div>
                            <div class="vscroll">
                                <button aria-label="Zum Anfang"><svg class="icon"><use href="#i-first"/></svg></button>
                                <button aria-label="Nach oben"><svg class="icon"><use href="#i-up"/></svg></button>
                                <button class="end" aria-label="Nach unten"><svg class="icon"><use href="#i-down"/></svg></button>
                            </div>
                            <div class="hscroll">
                                <button aria-label="Nach links"><svg class="icon"><use href="#i-left"/></svg></button>
                                <button aria-label="Nach rechts"><svg class="icon"><use href="#i-right"/></svg></button>
                            </div>
                            <div class="corner">
                                <button aria-label="Zum Ende"><svg class="icon"><use href="#i-last"/></svg></button>
                            </div>
                        </section>
                        <div class="list-tools">
                            <button aria-label="Bestand hinzufügen"><svg class="icon"><use href="#i-sun"/></svg></button>
                            <button aria-label="Bestand löschen" disabled><svg class="icon"><use href="#i-del"/></svg></button>
                        </div>
                    </div>
                </div>
            </div>
        </main>

        <aside class="sidebar">
            <button><svg class="icon"><use href="#i-tag-info"/></svg><span>Beleg-Info</span></button>
            <button><svg class="icon"><use href="#i-box-info"/></svg><span>Lager-Info</span></button>
            <hr>
            <button><svg class="icon"><use href="#i-mag-sync"/></svg><span>Änderungen</span></button>
            <button class="plain"><span>Inventurinfo</span></button>
            <hr>
            <button><svg class="icon"><use href="#i-pad-mag"/></svg><span>Artikeltexte</span></button>
            <button><svg class="icon"><use href="#i-pad-info"/></svg><span>Artikelinfo</span></button>
        </aside>
    </div>

    <nav class="windowbar">
        <button><svg class="icon"><use href="#i-docs"/></svg>Dokumente</button>
        <button><svg class="icon"><use href="#i-cal"/></svg>Kalender</button>
        <button><svg class="icon"><use href="#i-gantt"/></svg>Projekte</button>
        <button class="active"><svg class="icon"><use href="#i-tag"/></svg>Artikel</button>
        <button><svg class="icon"><use href="#i-diamonds"/></svg>PDF Feldinhalte</button>
        <button><svg class="icon"><use href="#i-diamonds"/></svg>PDF-Vorlagen-K...</button>
        <button><svg class="icon"><use href="#i-card"/></svg>VIframe-Mitarb...</button>
        <button><svg class="icon"><use href="#i-diamonds"/></svg>Mandanten-Ein...</button>
        <button><svg class="icon"><use href="#i-diamonds"/></svg>E-Mail-Vorlage...</button>
        <button><svg class="icon"><use href="#i-diamonds"/></svg>Materialanforde...</button>
        <button><svg class="icon"><use href="#i-note-pen"/></svg>Bestellbelege</button>
        <button><svg class="icon"><use href="#i-card-orange"/></svg>Lieferanten</button>
    </nav>

    <footer class="statusbar">
        <span class="cell-s"></span>
        <span class="cell-s"></span>
        <span class="cell-l"></span>
        <span class="cell-l"></span>
        <span>2K</span>
        <span>0E</span>
        <span>2D</span>
        <span>3V</span>
        <span></span>
        <span class="client">Mandant: 1 swp-Bau GmbH</span>
    </footer>
</body>
</html>
```

FILE: styles.css
```css
* {
    box-sizing: border-box;
}
body {
    margin: 0;
    height: 100vh;
    display: flex;
    flex-direction: column;
    overflow: hidden;
    background: #f0f0f0;
    color: #000;
}
body, button, input, select, textarea {
    font-family: "Noto Sans", "Open Sans", sans-serif;
    font-size: 11px;
    line-height: 15px;
}
button {
    padding: 0;
    border: none;
    background: none;
    color: inherit;
    white-space: nowrap;
}
h1, h2 {
    margin: 0;
    font-size: 11px;
    line-height: 15px;
}
h2 {
    color: #6d6d6d;
}
a {
    color: #0a66cc;
    text-decoration: none;
}
u {
    text-underline-offset: 2px;
}
.gradients {
    position: absolute;
    width: 0;
    height: 0;
}
.sprite {
    display: none;
}
.icon {
    display: block;
    flex: none;
    width: 16px;
    height: 16px;
}
.faded {
    opacity: 0.4;
}

/* Titel, Menü, Werkzeugleiste */
.titlebar {
    display: flex;
    align-items: center;
    height: 23px;
    padding: 0 2px;
    background: #fff;
}
.title {
    flex: 1;
    margin-left: 5px;
}
.window-buttons {
    display: flex;
}
.window-buttons button {
    width: 46px;
    height: 20px;
}
.window-buttons svg {
    width: 10px;
    height: 10px;
    fill: none;
    stroke: #000;
}
.menubar {
    display: flex;
    align-items: center;
    height: 20px;
    padding: 0 1px 0 8px;
    gap: 15px;
    background: #fff;
    border-bottom: 2px solid #f0f0f0;
}
.menubar .icon {
    margin-right: -10px;
}
.mdi-buttons {
    display: flex;
    gap: 1px;
    margin-left: auto;
}
.mdi-buttons button {
    width: 18px;
    height: 18px;
    border: 1px solid #e5e5e5;
}
.mdi-buttons svg {
    width: 10px;
    height: 10px;
    fill: none;
    stroke: #6f8296;
}
.toolbar {
    display: flex;
    align-items: center;
    height: 26px;
    padding-left: 2px;
    background: #fff;
    border-bottom: 1px solid #d9d9d9;
}
.toolbar button {
    display: flex;
    align-items: center;
    justify-content: center;
    width: 23px;
    height: 21px;
}
.toolbar .pressed {
    background: #cce8ff;
    border: 1px solid #99d1ff;
}
.sep {
    width: 1px;
    height: 18px;
    margin: 0 4px 0 3px;
    background: #808080;
}
.sep.band {
    height: 26px;
    margin: 0 2px 0 5px;
    background: #b5b5b5;
}

/* Suche */
.searchbar {
    display: flex;
    height: 22px;
}
.search {
    flex: none;
    width: 960px;
    padding: 0 2px 2px;
    border: 1px solid #a0a0a0;
    outline: none;
}
.search-field {
    flex: 1;
    display: flex;
    align-items: center;
    padding: 0 4px;
    gap: 5px;
    background: #fff;
    border: 1px solid #6d6d6d;
}
.search-field select {
    flex: 1;
    padding: 0 0 2px;
    border: none;
    background: none;
    appearance: none;
}
.chevron {
    width: 10px;
    height: 6px;
    fill: none;
    stroke: #444;
}

/* Listen */
.list {
    display: grid;
    grid-template-columns: 1fr 17px;
    grid-template-rows: 1fr 17px;
    padding: 1px;
    background: #fff;
    border: 1px solid #828790;
}
.list-body {
    overflow: hidden;
}
.list table {
    width: 0;
    table-layout: fixed;
    border-collapse: separate;
    border-spacing: 0;
}
.list th, .list td {
    padding: 0 5px 2px 6px;
    border-right: 1px solid #e3e3e3;
    font-weight: normal;
    text-align: left;
    white-space: nowrap;
}
.list th {
    position: relative;
    height: 24px;
}
.list td {
    height: 21px;
    padding: 0 2px 2px 3px;
    border-right-color: #ece9d8;
    border-bottom: 1px solid #f0f0f0;
}
.list .num {
    text-align: right;
}
.list .price {
    padding-right: 5px;
}
.list .no-line {
    padding: 0;
    border-right: none;
}
.list .dark-line {
    border-right-color: #808080;
}
.list .name {
    background: #ffffe1;
    color: #000080;
    font-weight: bold;
}
.list .selected td {
    background: #bfddf5;
}
.list .selected .marker {
    background: #a0cdf2;
}
.list .selected .current {
    background: #9fcbe1;
    border: 1px solid #0078d7;
    padding-left: 2px;
}
.list .rest td {
    height: 5px;
    border-bottom: none;
}
.caret {
    position: absolute;
    top: 0;
    left: 50%;
    width: 8px;
    height: 5px;
    fill: none;
    stroke: #555;
}
.sort {
    display: flex;
    align-items: center;
    justify-content: center;
    width: 18px;
    height: 22px;
    margin-left: 1px;
    background: #e1e1e1;
    border: 1px solid #adadad;
}
.vscroll {
    display: flex;
    flex-direction: column;
    min-height: 0;
    margin-top: 24px;
    background: #f0f0f0;
}
.vscroll button {
    min-height: 0;
    overflow: hidden;
}
.hscroll {
    display: flex;
    align-items: center;
    justify-content: space-between;
    background: #f0f0f0;
}
.corner {
    background: #f0f0f0;
}
.vscroll .end {
    margin-top: auto;
}
.articles {
    height: 91px;
}
.w20 { width: 20px; }
.w55 { width: 55px; }
.w61 { width: 61px; }
.w80 { width: 80px; }
.w83 { width: 83px; }
.w90 { width: 90px; }
.w93 { width: 93px; }
.w98 { width: 98px; }
.w101 { width: 101px; }
.w103 { width: 103px; }
.w111 { width: 111px; }
.w118 { width: 118px; }
.w121 { width: 121px; }
.w133 { width: 133px; }
.w146 { width: 146px; }
.w178 { width: 178px; }
.w186 { width: 186px; }
.w328 { width: 328px; }

/* Arbeitsbereich */
.workspace {
    flex: 1;
    display: flex;
    min-height: 0;
    margin-top: 8px;
    border: 1px solid #a0a0a0;
}
.form-area {
    flex: 1;
    display: flex;
    flex-direction: column;
    padding: 9px 2px 2px 1px;
}
.record-title {
    margin: 0 4px 0 7px;
    padding: 1px;
    background: #fff;
    border: 1px solid #6d6d6d;
}
.record-title span {
    display: block;
    padding: 2px 8px 5px;
    background: #228b22;
    color: #fff;
}
.tabs {
    display: flex;
    align-items: flex-end;
    height: 24px;
    padding-left: 2px;
}
.tabs button {
    display: flex;
    align-items: center;
    gap: 5px;
    height: 22px;
    padding: 0 3px 0 4px;
    border: 1px solid #d9d9d9;
    border-width: 1px 1px 0 0;
}
.tabs button:first-child {
    border-left-width: 1px;
}
.tabs .active {
    height: 24px;
    padding: 0 3px 4px 5px;
    gap: 7px;
    margin-bottom: -1px;
    background: #fff;
}
.page {
    flex: 1;
    padding: 15px 0 0 15px;
    background: #fff;
    border: 1px solid #d9d9d9;
}
.groups {
    display: flex;
}
.group h2 {
    margin-bottom: 4px;
    border-bottom: 1px solid #a0a0a0;
    line-height: 14px;
}
.divider {
    width: 1px;
    margin: 18px 7px 0 2px;
    background: #a0a0a0;
}
.row {
    display: flex;
    align-items: center;
    height: 34px;
}
.row label, .row .unit, .detail .row a {
    padding-bottom: 3px;
}
.row input, .info textarea {
    height: 26px;
    padding: 0 4px 4px;
    background: #fff;
    border: 1px solid #6d6d6d;
}
.row input:disabled {
    border-color: #ccc;
}
.row .num {
    padding-right: 1px;
    text-align: right;
}
.short {
    width: 84px;
}
.tiny {
    width: 42px;
}
.row .flag {
    width: 16px;
    margin: 0 2px;
    padding: 0 0 4px;
    text-align: center;
}
.tool {
    margin-left: 6px;
}
.tool + .tool {
    margin-left: 11px;
}
.tool:disabled, .list-tools button:disabled {
    opacity: 0.35;
}
.spaced {
    margin-left: 8px;
}
.unit {
    margin-left: 3px;
}
.g-main {
    width: 395px;
}
.g-main label {
    width: 116px;
}
.g-main .long {
    width: 272px;
}
.g-prices {
    width: 334px;
    padding-right: 4px;
}
.g-prices label {
    width: 93px;
}
.g-calc {
    width: 407px;
}
.g-calc h2 {
    margin-right: 7px;
}
.g-calc label {
    width: 116px;
}
.buttons {
    display: flex;
    flex-wrap: wrap;
}
.g-calc .buttons {
    display: grid;
    grid-template-columns: 270px 120px;
    gap: 9px 15px;
    padding: 12px 0 0 1px;
}
.btn {
    display: flex;
    align-items: center;
    justify-content: center;
    gap: 5px;
    height: 24px;
    padding-bottom: 1px;
    background: #e1e1e1;
    border: 1px solid #adadad;
}
.btn:disabled {
    background: #ccc;
    border-color: #bfbfbf;
    color: #838383;
}
.btn:disabled .icon {
    opacity: 0.6;
}
.list-title {
    margin-top: 7px;
    padding-bottom: 1px;
}
.list-row {
    display: flex;
}
.suppliers {
    flex: 1;
    height: 100px;
}
.list-tools {
    display: flex;
    flex-direction: column;
    gap: 10px;
    padding: 5px 12px 0 8px;
}
.detail {
    display: flex;
    height: 216px;
    margin: 1px 36px 0 0;
    padding: 3px;
    border: 1px solid #a0a0a0;
    outline: 1px solid #e3e3e3;
    outline-offset: -2px;
}
.detail .divider {
    margin: 14px 6px 20px 4px;
}
.g-supplier {
    width: 452px;
}
.g-supplier label {
    width: 113px;
}
.g-supplier .long {
    width: 334px;
}
.g-supplier-prices {
    width: 321px;
}
.g-supplier-prices label {
    width: 97px;
}
.g-supplier-prices .flag {
    margin-left: 1px;
    margin-right: 5px;
}
.g-misc {
    width: 411px;
}
.g-misc label {
    width: 122px;
}
.g-misc .unit {
    margin-left: 8px;
}
.g-misc .buttons {
    gap: 5px;
    padding: 8px 0 0 5px;
}
.g-misc .btn {
    width: 165px;
}
/* Die Linie von "Sonstiges" läuft über die Infospalte */
.info {
    flex: 1;
    display: grid;
    grid-template-columns: 1fr 16px;
    grid-template-rows: auto 131px;
    column-gap: 6px;
    align-content: start;
    margin-left: -15px;
    padding: 40px 16px 0 0;
}
.info label {
    grid-column: 1 / 3;
    padding-bottom: 2px;
}
.info textarea {
    height: auto;
    resize: none;
}
.info .tool {
    align-self: start;
    margin: 6px 0 0;
}
.stock {
    padding: 3px 0 0 3px;
}
.stock h2 {
    padding-bottom: 1px;
}
.stock-list {
    width: 445px;
    height: 110px;
}
.stock .list-tools {
    padding-left: 6px;
}

/* Seitenleiste */
.sidebar {
    display: flex;
    flex-direction: column;
    width: 96px;
    padding: 2px 3px;
    border-left: 1px solid #a0a0a0;
}
.sidebar button {
    display: flex;
    align-items: center;
    height: 22px;
    padding-left: 1px;
}
.sidebar button span {
    flex: 1;
    text-align: center;
}
.sidebar .plain {
    padding-right: 12px;
}
.sidebar hr {
    width: 100%;
    height: 1px;
    margin: 2px 0 5px;
    border: none;
    background: #808080;
}

/* Fensterleiste und Status */
.windowbar {
    display: flex;
    align-items: center;
    height: 26px;
    padding: 0 0 1px 2px;
    background: #fff;
}
.windowbar button {
    display: flex;
    align-items: center;
    gap: 4px;
    width: 120px;
    height: 21px;
    padding-left: 3px;
}
.windowbar .active {
    background: #cce8ff;
    border: 1px solid #99d1ff;
}
.statusbar {
    display: flex;
    height: 24px;
    border-top: 2px solid #d9d9d9;
}
.statusbar span {
    width: 30px;
    padding: 2px 0 0 2px;
    border-right: 1px solid #d9d9d9;
    text-align: center;
}
.statusbar .cell-s {
    width: 20px;
}
.statusbar .cell-l {
    width: 50px;
}
.statusbar .client {
    width: 250px;
    padding-left: 4px;
    text-align: left;
}
```
